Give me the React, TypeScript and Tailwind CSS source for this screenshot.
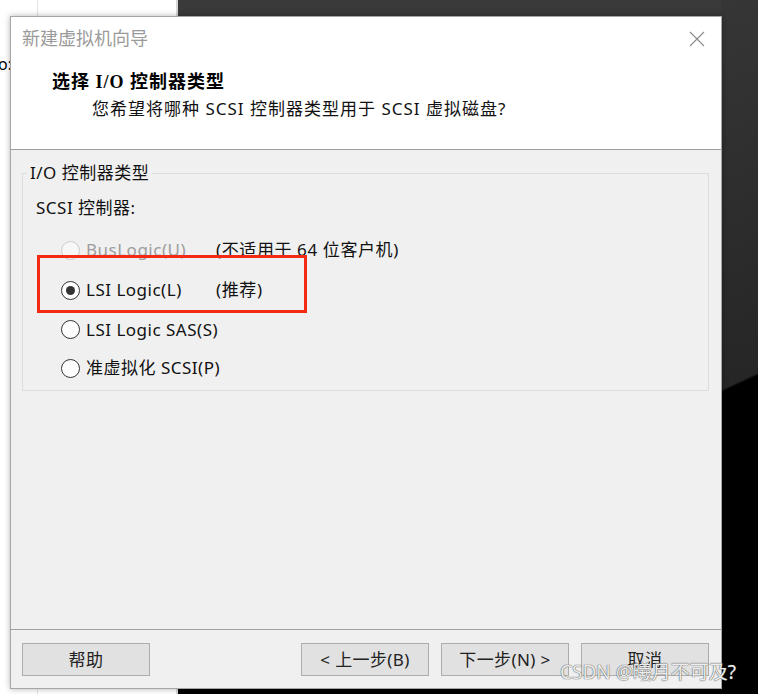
import React from 'react'

type Props = {}

type RadioItem = {
  label: string
  note?: string
  checked?: boolean
  disabled?: boolean
  h: string
}

const items: RadioItem[] = [
  { label: 'BusLogic(U)', note: '(不适用于 64 位客户机)', disabled: true, h: 'h-[40px]' },
  { label: 'LSI Logic(L)', note: '(推荐)', checked: true, h: 'h-[40px]' },
  { label: 'LSI Logic SAS(S)', h: 'h-[39px]' },
  { label: '准虚拟化 SCSI(P)', h: 'h-[38px]' },
]

const Radio = ({ checked, disabled }: { checked?: boolean; disabled?: boolean }) => {
  return (
    <span
      className={
        disabled
          ? 'flex h-[19px] w-[19px] shrink-0 items-center justify-center rounded-full border border-[#cccccc] bg-[#f7f7f7]'
          : 'flex h-[19px] w-[19px] shrink-0 items-center justify-center rounded-full border border-[#333333] bg-white'
      }
    >
      {checked && <span className="h-[9px] w-[9px] rounded-full bg-[#333333]" />}
    </span>
  )
}

const WizardButton = ({ children }: { children: React.ReactNode }) => {
  return (
    <button className="flex h-[33px] w-[128px] items-center justify-center border border-[#adadad] bg-[#e1e1e1] text-[17px] tracking-[0.4px] text-[#222]">
      {children}
    </button>
  )
}

const App = (props: Props) => {
  return (
    <div
      className="relative h-[694px] w-[758px] overflow-hidden bg-white"
      style={{ fontFamily: '"Noto Sans", "Noto Sans CJK SC", sans-serif' }}
    >
      {/* desktop behind the wizard */}
      <div className="absolute left-[37px] top-0 h-full w-px bg-[#e3e3e3]" />
      <div className="absolute left-[176px] top-0 h-full w-[2px] bg-[#d6d6d6]" />
      <div className="absolute left-[178px] top-0 h-full w-[545px] bg-[linear-gradient(180deg,#3a3a3a_0%,#2b2b2b_50%,#000_51%,#000_100%)]" />
      <div className="absolute left-[721px] top-0 h-full w-[37px] bg-[linear-gradient(155deg,#363636_0%,#262626_54.8%,#000_55.2%,#000_100%)]" />
      <span className="absolute left-[-2px] top-[52px] text-[16px] text-black">o:.</span>

      {/* wizard window */}
      <div className="absolute left-[10px] top-[16px] flex h-[673px] w-[712px] flex-col border border-[#a6a6a6] bg-[#f0f0f0] shadow-[0_0_6px_rgba(0,0,0,0.3)]">
        <div className="relative h-[133px] border-b border-[#a0a0a0] bg-white">
          <div className="pl-[11px] pt-[8px] text-[18px] leading-[24px] text-[#9a9a9a]" style={{ fontFamily: '"Noto Sans CJK SC", sans-serif' }}>
            新建虚拟机向导
          </div>
          <svg className="absolute right-[16px] top-[14px]" width="16" height="16" viewBox="0 0 16 16">
            <path d="M1 1 L15 15 M15 1 L1 15" stroke="#8a8a8a" strokeWidth="1.1" fill="none" />
          </svg>
          <div
            className="mt-[21px] pl-[41px] text-[18px] font-bold leading-[24px] tracking-[1px] text-black"
            style={{ fontFamily: '"Liberation Serif", "Noto Sans CJK SC", serif' }}
          >
            选择 I/O 控制器类型
          </div>
          <div className="mt-[3px] pl-[81px] text-[17px] leading-[24px] tracking-[1px] text-[#111]">
            您希望将哪种 SCSI 控制器类型用于 SCSI 虚拟磁盘?
          </div>
        </div>

        <div className="relative flex-1 px-[11px] pt-[12px]">
          <fieldset className="h-[229px] w-[687px] border border-[#dcdcdc] px-0">
            <legend className="ml-[4px] px-[3px] text-[17px] leading-[22px] tracking-[0.5px] text-[#111]">I/O 控制器类型</legend>
            <div className="pl-[13px] pt-[12px] text-[17px] leading-[24px] tracking-[0.5px] text-[#111]">SCSI 控制器:</div>
            <div className="mt-[10px] flex flex-col">
              {items.map((item) => (
                <div key={item.label} className={`flex items-center whitespace-nowrap ${item.h}`}>
                  <div className="ml-[38px] flex w-[155px] shrink-0 items-center gap-[6px]">
                    <Radio checked={item.checked} disabled={item.disabled} />
                    <span
                      className={
                        item.disabled
                          ? 'text-[17px] tracking-[0.5px] text-[#9d9d9d]'
                          : 'text-[17px] tracking-[0.5px] text-[#111]'
                      }
                    >
                      {item.label}
                    </span>
                  </div>
                  {item.note && <span className="text-[17px] tracking-[0.6px] text-[#111]">{item.note}</span>}
                </div>
              ))}
            </div>
          </fieldset>
          {/* red highlight drawn on the screenshot */}
          <div className="absolute left-[26px] top-[105px] h-[58px] w-[270px] border-[3px] border-[#f52a12]" />
        </div>

        <div className="flex h-[59px] items-start justify-between border-t border-[#a0a0a0] pl-[11px] pr-[12px] pt-[13px]">
          <WizardButton>帮助</WizardButton>
          <div className="flex gap-[12px]">
            <WizardButton>&lt; 上一步(B)</WizardButton>
            <WizardButton>下一步(N) &gt;</WizardButton>
            <WizardButton>取消</WizardButton>
          </div>
        </div>
      </div>

      <span className="absolute left-[560px] top-[659px] text-[19px] leading-[26px] text-[#ececec] [text-shadow:0_0_1px_#555,0_0_1px_#555]">
        CSDN @曦月不可及?
      </span>
    </div>
  )
}

export default App
